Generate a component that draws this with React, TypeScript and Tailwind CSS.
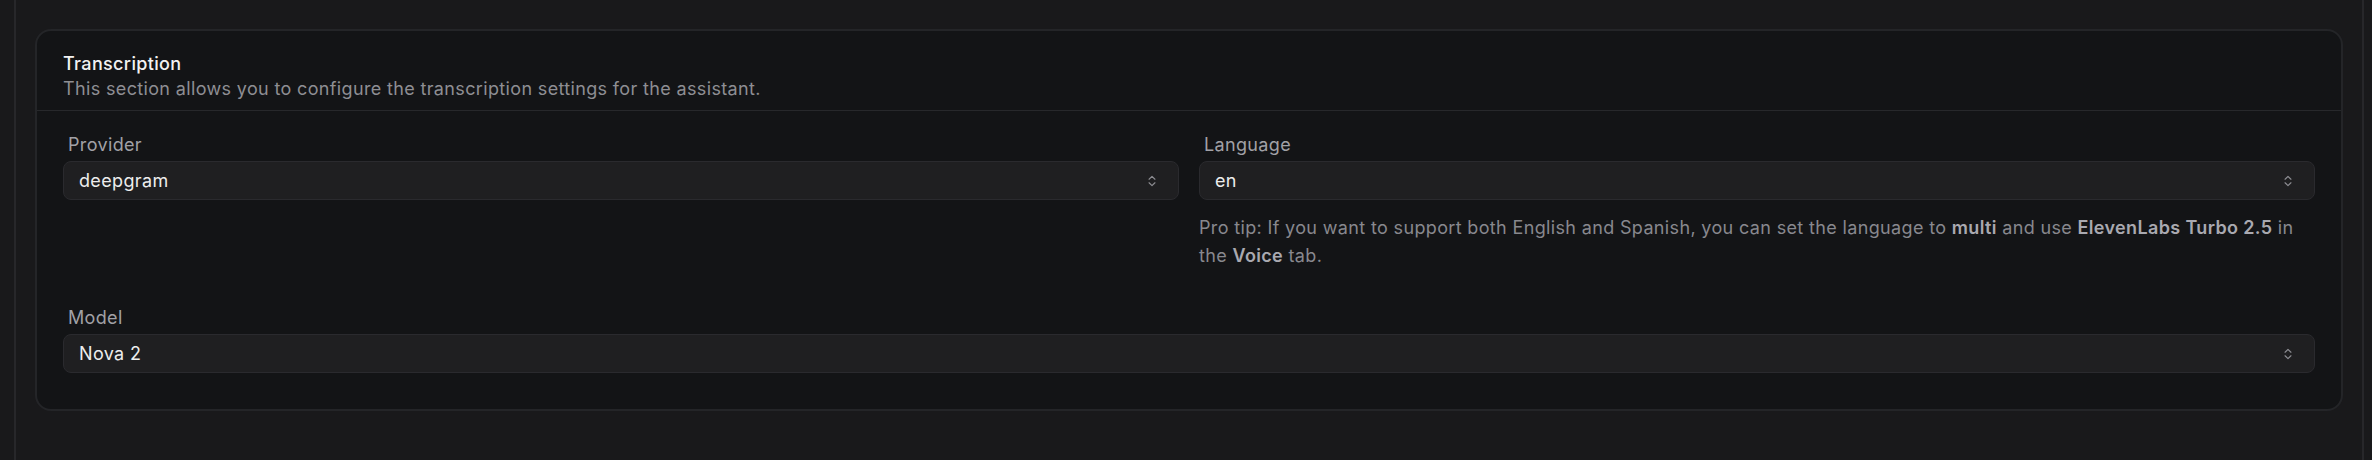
import { ChevronsUpDown } from 'lucide-react';

function SelectBox({ value }: { value: string }) {
    return (
        <div className="flex h-[39px] items-center justify-between rounded-lg border border-[#2a2a2e] bg-[#1f1f21] pl-[15px] pr-[19px] text-[18px] text-[#ededed]">
            <span>{value}</span>
            <ChevronsUpDown className="h-[14px] w-[14px] text-[#8d8d92]" strokeWidth={2} />
        </div>
    );
}

function Field({ label, value, children }: { label: string; value: string; children?: React.ReactNode }) {
    return (
        <div className="flex flex-col">
            <label className="mb-[4px] pl-[5px] text-[18px] leading-[25px] text-[#a1a1a6]">{label}</label>
            <SelectBox value={value} />
            {children}
        </div>
    );
}

export default function App() {
    return (
        <div className="min-h-screen bg-[#19191b] font-['Inter','Liberation_Sans',sans-serif] tracking-[0.35px]">
            <div className="ml-[14px] mr-[8px] h-[460px] border-x-2 border-[#27272a] px-[19px] pt-[29px]">
                <section className="rounded-2xl border-2 border-[#242528] bg-[#131416]">
                    <header className="border-b border-[#27282b] px-[26px] pt-[20px] pb-[9px]">
                        <h2 className="text-[18px] font-medium leading-[25px] text-[#f2f2f2]">Transcription</h2>
                        <p className="text-[18px] leading-[25px] text-[#8e8e93]">
                            This section allows you to configure the transcription settings for the assistant.
                        </p>
                    </header>

                    <div className="grid grid-cols-2 gap-x-[20px] gap-y-[35px] px-[26px] pt-[21px] pb-[36px]">
                        <Field label="Provider" value="deepgram" />
                        <Field label="Language" value="en">
                            <p className="mt-[14px] text-[18px] leading-[28px] text-[#88888e]">
                                Pro tip: If you want to support both English and Spanish, you can set the language to{' '}
                                <b className="font-semibold text-[#a9a9b0]">multi</b> and use{' '}
                                <b className="font-semibold text-[#a9a9b0]">ElevenLabs Turbo 2.5</b> in the{' '}
                                <b className="font-semibold text-[#a9a9b0]">Voice</b> tab.
                            </p>
                        </Field>
                        <div className="col-span-2">
                            <Field label="Model" value="Nova 2" />
                        </div>
                    </div>
                </section>
            </div>
        </div>
    );
}
